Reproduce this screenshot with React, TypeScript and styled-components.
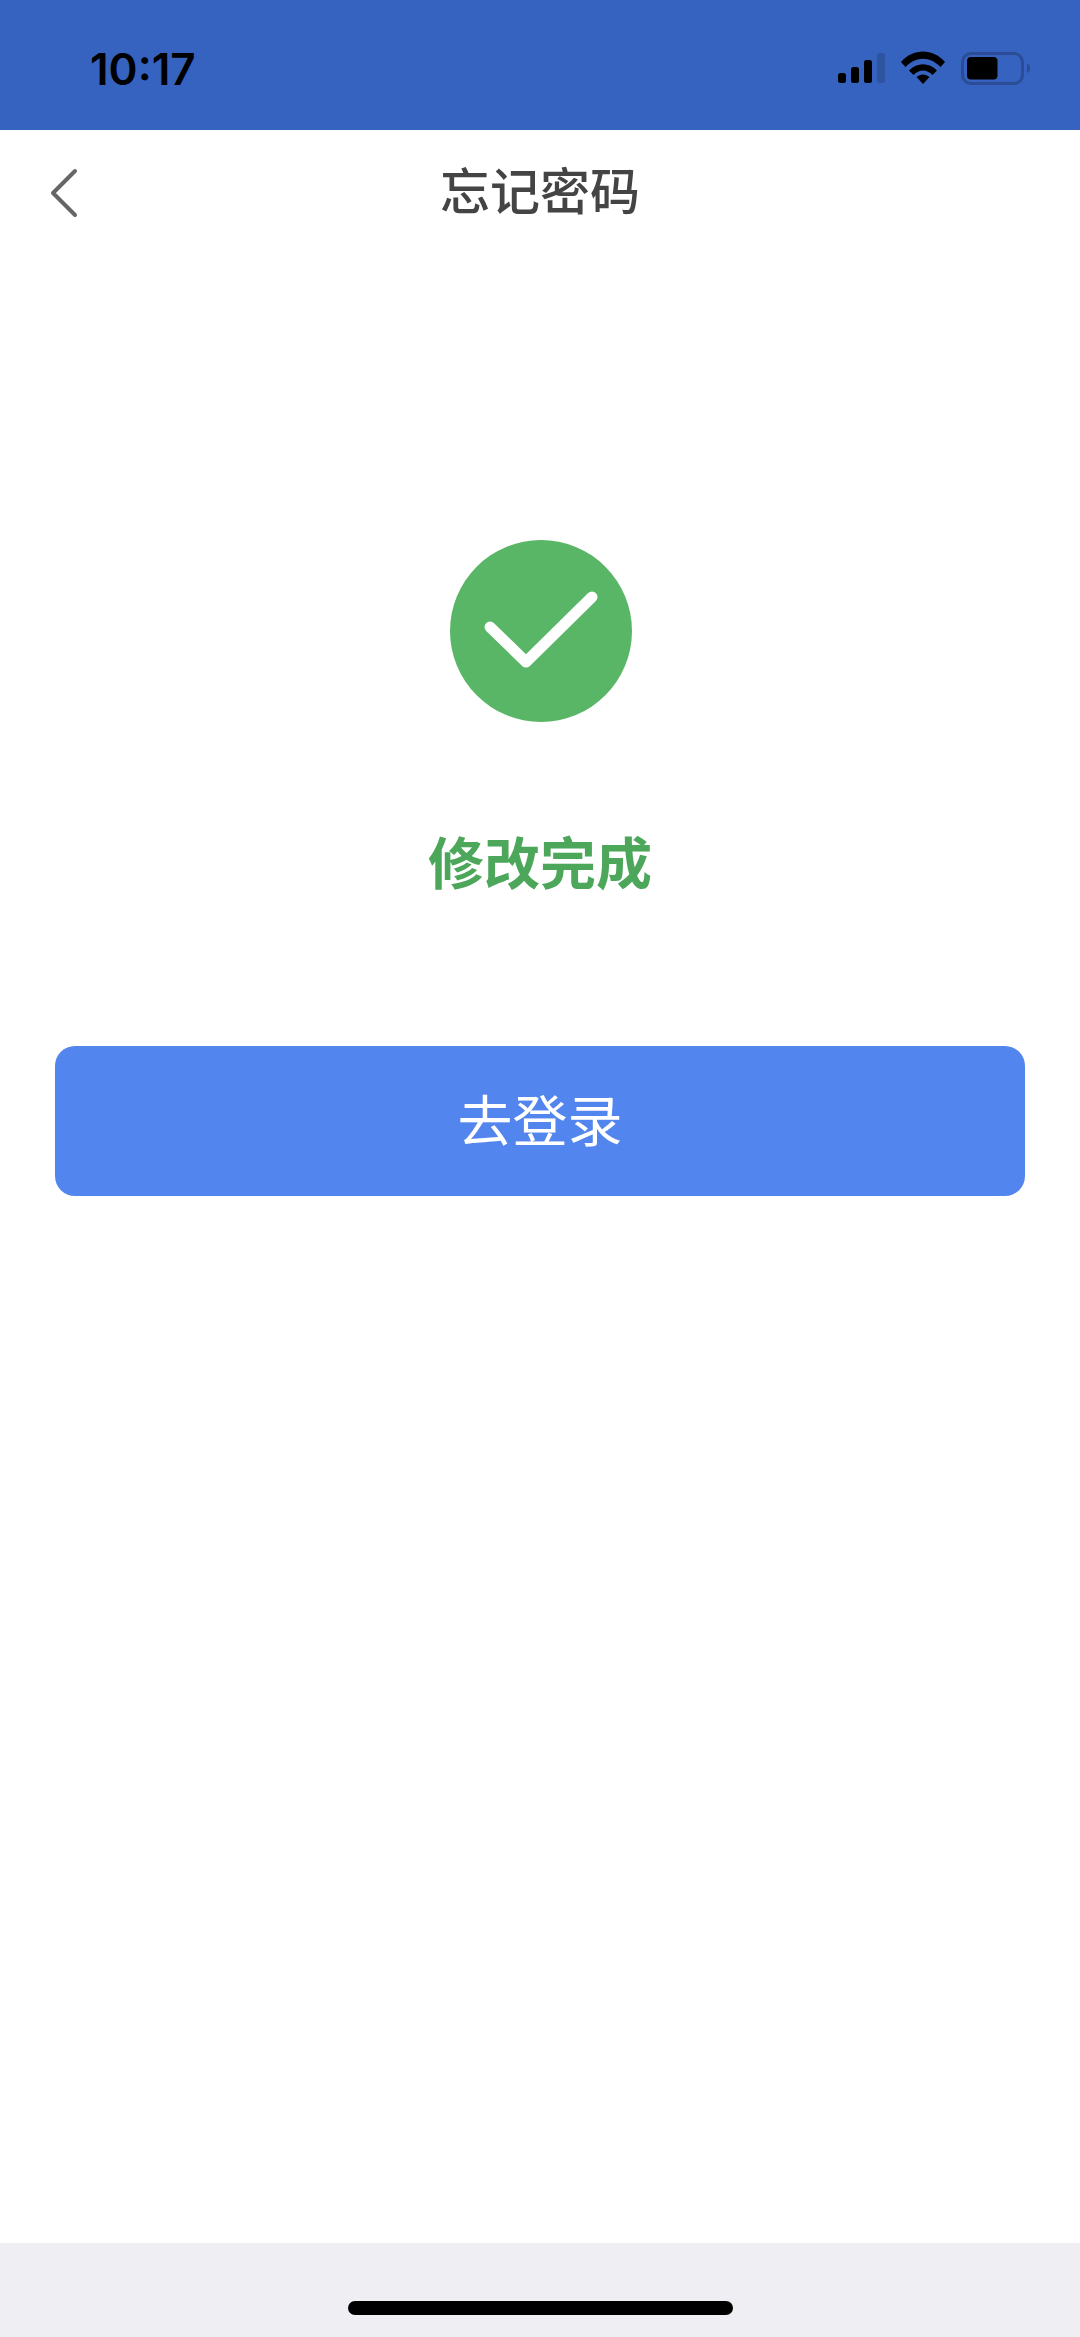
import React from "react";
import styled, { createGlobalStyle } from "styled-components";

const Global = createGlobalStyle`
  html, body { margin: 0; padding: 0; background: #fff; }
`;

const CJK = `"Noto Sans CJK SC", "Noto Sans", sans-serif`;

const Page = styled.div`
  width: 1080px;
  height: 2337px;
  display: flex;
  flex-direction: column;
  background: #fff;
  overflow: hidden;
`;

const StatusBar = styled.header`
  height: 130px;
  flex: none;
  box-sizing: border-box;
  background: #3662c0;
  display: flex;
  align-items: flex-start;
  justify-content: space-between;
  padding: 44px 50px 0 90px;
`;

const Time = styled.div`
  font-family: "Inter", "Liberation Sans", sans-serif;
  font-size: 44px;
  font-weight: 600;
  line-height: 50px;
  letter-spacing: 0;
  color: #000;
`;

const StatusIcons = styled.div`
  display: flex;
  align-items: flex-start;
  gap: 16px;
  margin-top: 9px;
`;

const NavBar = styled.nav`
  height: 122px;
  flex: none;
  position: relative;
  display: flex;
  align-items: center;
  justify-content: center;
`;

const BackIcon = styled.svg`
  position: absolute;
  left: 49px;
  top: 38px;
`;

const NavTitle = styled.h1`
  margin: -6px 0 0;
  font-family: ${CJK};
  font-size: 50px;
  line-height: 70px;
  font-weight: 500;
  color: #444;
`;

const Content = styled.main`
  flex: 1;
  display: flex;
  flex-direction: column;
  align-items: center;
  padding-top: 288px;
`;

const SuccessIcon = styled.svg`
  display: block;
  margin-left: 2px;
`;

const Message = styled.div`
  margin-top: 102px;
  font-family: ${CJK};
  font-size: 56px;
  line-height: 72px;
  font-weight: 700;
  color: #4ca75b;
`;

const PrimaryButton = styled.button`
  margin-top: 150px;
  width: 970px;
  height: 150px;
  border: 0;
  border-radius: 20px;
  background: #5385ee;
  color: #fff;
  font-family: ${CJK};
  font-size: 55px;
  font-weight: 400;
  padding: 0 0 8px;
`;

const Footer = styled.footer`
  height: 94px;
  flex: none;
  box-sizing: border-box;
  background: #eeeef3;
  display: flex;
  justify-content: center;
  padding-top: 58px;
`;

const HomeIndicator = styled.div`
  width: 385px;
  height: 14px;
  border-radius: 7px;
  background: #000;
`;

export default function App() {
  return (
    <Page>
      <Global />
      <StatusBar>
        <Time>10:17</Time>
        <StatusIcons>
          <svg width="47" height="32" viewBox="0 0 47 32">
            <rect x="0" y="20" width="8" height="10" rx="2.5" fill="#000" />
            <rect x="13" y="14" width="8" height="16" rx="2.5" fill="#000" />
            <rect x="26" y="7" width="8" height="23" rx="2.5" fill="#000" />
            <rect x="39" y="0" width="8" height="30" rx="2.5" fill="#2d549f" />
          </svg>
          <svg width="44" height="33" viewBox="0 0 44 33" style={{ marginTop: -2 }}>
            <path d="M0 11 C12 -3 32 -3 44 11 L39.5 16 C29 5 15 5 4.5 16 Z" fill="#000" />
            <path d="M8 19.5 C16 11 28 11 36 19.5 L31.5 24 C25.500 18 18.5 18 12.5 24 Z" fill="#000" />
            <path d="M15.5 26 C19.5 22.5 24.5 22.5 28.5 26 L22 33 Z" fill="#000" />
          </svg>
          <svg width="69" height="33" viewBox="0 0 69 33" style={{ marginTop: -1 }}>
            <rect x="1.5" y="1.5" width="60" height="30" rx="8.5" fill="none" stroke="#2a4d95" strokeWidth="3" />
            <rect x="6" y="5" width="30.5" height="22.5" rx="4" fill="#000" />
            <path d="M66 11 C68 12.5 69 14.5 69 16.5 C69 18.5 68 20.5 66 21 Z" fill="#2a4d95" />
          </svg>
        </StatusIcons>
      </StatusBar>

      <NavBar>
        <BackIcon width="30" height="50" viewBox="0 0 30 50">
          <path d="M26 3 L4 25 L26 47" fill="none" stroke="#666" strokeWidth="4" strokeLinecap="round" strokeLinejoin="round" />
        </BackIcon>
        <NavTitle>忘记密码</NavTitle>
      </NavBar>

      <Content>
        <SuccessIcon width="182" height="182" viewBox="0 0 182 182">
          <circle cx="91" cy="91" r="91" fill="#5ab667" />
          <path d="M40 87 L76 122 L142 57" fill="none" stroke="#fff" strokeWidth="11" strokeLinecap="round" strokeLinejoin="round" />
        </SuccessIcon>
        <Message>修改完成</Message>
        <PrimaryButton>去登录</PrimaryButton>
      </Content>

      <Footer>
        <HomeIndicator />
      </Footer>
    </Page>
  );
}
